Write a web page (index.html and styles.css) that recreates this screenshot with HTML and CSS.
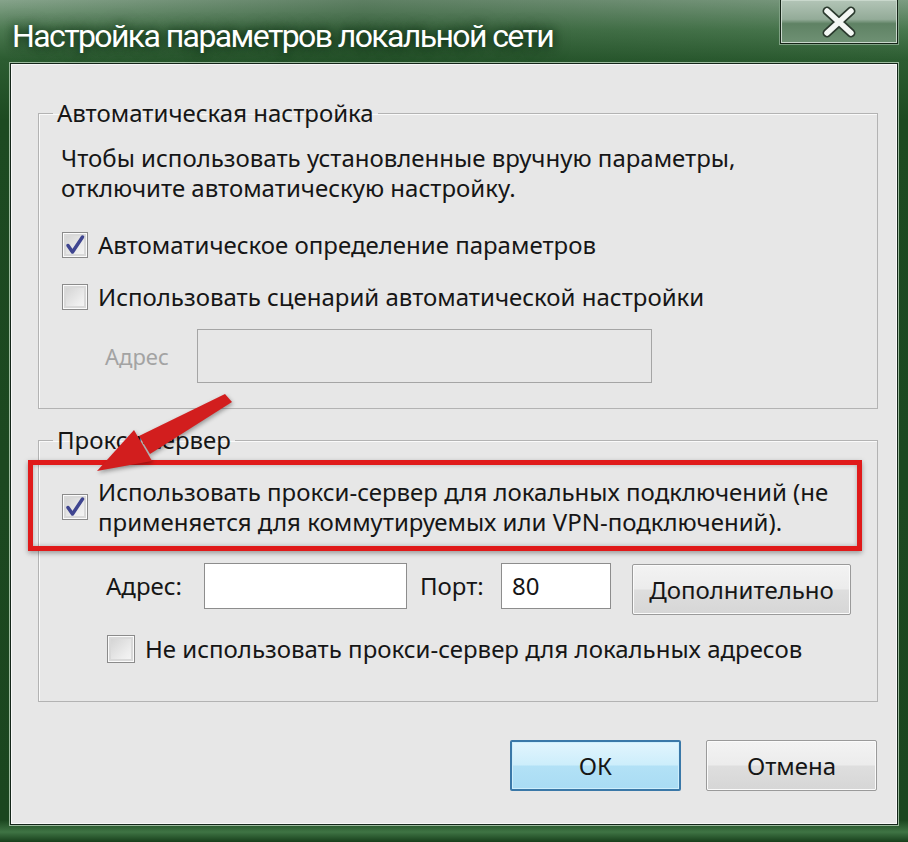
FILE: index.html
```html
<!DOCTYPE html>
<html lang="ru">
<head>
    <meta charset="UTF-8">
    <title>Настройка параметров локальной сети</title>
    <link rel="stylesheet" href="styles.css">
</head>
<body>

    <div class="window">
        <!-- заголовок окна -->
        <div class="titlebar">
            <span class="title">Настройка параметров локальной сети</span>
            <div class="close">
                <svg width="40" height="32" viewBox="0 0 40 32">
                    <path d="M8 5 L32 27 M32 5 L8 27" stroke="#2b3a2e" stroke-width="9" stroke-linecap="round"/>
                    <path d="M8 5 L32 27 M32 5 L8 27" stroke="#f4f7f4" stroke-width="5.5" stroke-linecap="round"/>
                </svg>
            </div>
        </div>

        <div class="panel">
            <fieldset class="group">
                <legend>Автоматическая настройка</legend>
                <p class="note">Чтобы использовать установленные вручную параметры,<br>отключите автоматическую настройку.</p>

                <label class="check-row first">
                    <span class="check">
                        <svg width="24" height="24" viewBox="0 0 24 24"><path d="M5 12.5 L9.5 19 L19.5 4" fill="none" stroke="#3f4590" stroke-width="3.5" stroke-linejoin="round" stroke-linecap="round"/></svg>
                    </span>
                    <span>Автоматическое определение параметров</span>
                </label>

                <label class="check-row second">
                    <span class="check"></span>
                    <span>Использовать сценарий автоматической настройки</span>
                </label>

                <div class="addr-row">
                    <span class="disabled-label">Адрес</span>
                    <span class="input disabled"></span>
                </div>
            </fieldset>

            <fieldset class="group proxy">
                <legend>Прокси-сервер</legend>

                <div class="marked">
                    <label class="check-row">
                        <span class="check">
                            <svg width="24" height="24" viewBox="0 0 24 24"><path d="M5 12.5 L9.5 19 L19.5 4" fill="none" stroke="#3f4590" stroke-width="3.5" stroke-linejoin="round" stroke-linecap="round"/></svg>
                        </span>
                        <span>Использовать прокси-сервер для локальных подключений (не<br>применяется для коммутируемых или VPN-подключений).</span>
                    </label>
                </div>

                <div class="proxy-row">
                    <span class="label">Адрес:</span>
                    <span class="input address"></span>
                    <span class="label port-label">Порт:</span>
                    <span class="input port">80</span>
                    <button class="btn more">Дополнительно</button>
                </div>

                <label class="check-row bypass">
                    <span class="check"></span>
                    <span>Не использовать прокси-сервер для локальных адресов</span>
                </label>
            </fieldset>

            <div class="actions">
                <button class="btn ok">ОК</button>
                <button class="btn">Отмена</button>
            </div>
        </div>

        <!-- красная стрелка поверх окна -->
        <svg class="arrow" width="908" height="842" viewBox="0 0 908 842">
            <polygon points="225,394 232,402 150,454 139,436" fill="#d21e1e"/>
            <polygon points="97,471 134,430 152,461" fill="#d21e1e"/>
        </svg>
    </div>

</body>
</html>
```

FILE: styles.css
```css
/* окно */
body {
    margin: 0;
    padding: 0;
    font-family: "Noto Sans", "Open Sans", sans-serif;
    color: #161616;
}
.window {
    position: relative;
    width: 908px;
    height: 842px;
    overflow: hidden;
    background: linear-gradient(180deg, #86a38b 0px, #4d7b52 30px, #2c5c31 60px, #1d4a21 120px, #1b461f 820px, #3f7444 832px, #173f1b 842px);
}
.titlebar {
    height: 63px;
    display: flex;
    justify-content: space-between;
    align-items: flex-start;
    padding-left: 12px;
    background: linear-gradient(90deg, rgba(30, 70, 35, 0.0) 0%, rgba(20, 60, 25, 0.35) 40%, rgba(40, 90, 45, 0.1) 100%);
}
.title {
    margin-top: 16px;
    font-family: Roboto, "Noto Sans", sans-serif;
    font-size: 32px;
    letter-spacing: -1.6px;
    line-height: 40px;
    color: #fff;
    text-shadow: 0 0 8px rgba(10, 40, 15, 0.9), 0 0 16px rgba(10, 40, 15, 0.7);
}
.close {
    width: 118px;
    height: 44px;
    margin-right: 10px;
    box-sizing: border-box;
    border: 1px solid #152417;
    border-top: none;
    box-shadow: inset 0 0 0 1px #c9d8cc, 0 0 0 1px #7fa184;
    background: linear-gradient(180deg, #b3c5b7 0%, #93ab98 45%, #5f8264 55%, #6f9174 100%);
    display: flex;
    justify-content: center;
    align-items: center;
}
.panel {
    height: 762px;
    margin: 0 10px;
    padding: 34px 19px 0 27px;
    box-sizing: border-box;
    background: #e7e7e7;
    border: 1px solid #14261a;
    box-shadow: 0 0 0 1px #9dbb9f, inset 0 0 0 1px #f8f8f8;
}

/* группы */
.group {
    margin: 0;
    padding: 0 22px 25px 22px;
    border: 1px solid #b3b3b3;
    box-shadow: inset 1px 1px 0 #fafafa;
}
.group legend {
    margin-left: -8px;
    padding: 0 4px;
    font-size: 24px;
    line-height: 30px;
}
.proxy {
    margin-top: 16px;
    padding-bottom: 37px;
}
.note {
    margin: 15px 0 0 0;
    font-size: 24px;
    line-height: 30px;
}
.check-row {
    display: flex;
    align-items: center;
    gap: 10px;
    font-size: 24px;
    line-height: 30px;
}
.check-row.first {
    margin-top: 27px;
    margin-left: 1px;
}
.check-row.second {
    margin-top: 22px;
    margin-left: 1px;
}
.check {
    flex: none;
    width: 26px;
    height: 26px;
    box-sizing: border-box;
    border: 1px solid #8b8b8b;
    box-shadow: inset 0 0 0 1px #fbfbfb, inset 0 0 0 3px #d9d9d9;
    background: linear-gradient(135deg, #cfcfcf 0%, #eeeeee 70%, #f8f8f8 100%);
    display: flex;
    justify-content: center;
    align-items: center;
}
.addr-row {
    display: flex;
    align-items: center;
    margin-top: 17px;
}
.disabled-label {
    margin-left: 44px;
    width: 92px;
    font-size: 22px;
    color: #a3a3a3;
}
.input {
    box-sizing: border-box;
    height: 46px;
    border: 1px solid #8d8d8d;
    background: #fff;
    font-size: 24px;
    line-height: 44px;
    padding-left: 10px;
}
.input.disabled {
    width: 455px;
    height: 54px;
    background: #e7e7e7;
    border-color: #a5a5a5;
}

/* красная рамка */
.marked {
    margin: 5px -7px 0 -33px;
    padding: 12px 0 9px 29px;
    border: 5px solid #e01a1a;
    box-shadow: 0 2px 5px rgba(0, 0, 0, 0.35), inset 0 0 4px rgba(0, 0, 0, 0.25);
}
.proxy-row {
    display: flex;
    align-items: flex-start;
    margin-top: 12px;
    margin-left: 45px;
}
.label {
    font-size: 24px;
    line-height: 46px;
    width: 98px;
}
.port-label {
    width: 81px;
    margin-left: 13px;
}
.input.address {
    width: 203px;
}
.input.port {
    width: 110px;
}
.btn {
    font-family: "Noto Sans", "Open Sans", sans-serif;
    font-size: 24px;
    color: #161616;
    height: 51px;
    padding: 0;
    border: 1px solid #9a9a9a;
    border-radius: 2px;
    box-shadow: inset 0 0 0 1px #fbfbfb;
    background: linear-gradient(180deg, #f3f3f3 0%, #ececec 48%, #dedede 52%, #d6d6d6 100%);
}
.more {
    width: 219px;
    margin-left: 21px;
    margin-top: 1px;
}
.check-row.bypass {
    margin-top: 19px;
    margin-left: 46px;
}
.bypass .check {
    width: 28px;
    height: 28px;
}

/* кнопки внизу */
.actions {
    display: flex;
    justify-content: flex-end;
    gap: 25px;
    margin-top: 38px;
    margin-right: 1px;
}
.actions .btn {
    width: 171px;
}
.actions .ok {
    border: 2px solid #3a78a8;
    box-shadow: inset 0 0 0 1px #cdeefc;
    background: linear-gradient(180deg, #e2f5fd 0%, #cdeefb 48%, #b2e1f6 52%, #a9dcf4 100%);
}
.arrow {
    position: absolute;
    left: 0;
    top: 0;
    filter: drop-shadow(1px 2px 2px rgba(0, 0, 0, 0.35));
}
```
